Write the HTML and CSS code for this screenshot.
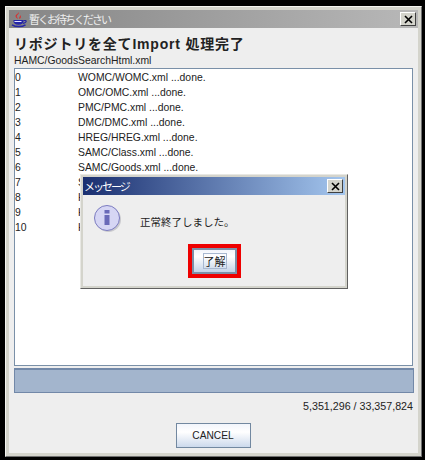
FILE: index.html
```html
<!DOCTYPE html>
<html lang="ja">
<head>
<meta charset="utf-8">
<title>暫くお待ちください</title>
<link rel="stylesheet" href="styles.css">
</head>
<body>
<div class="window">
  <div class="titlebar">
    <svg class="java-icon" width="18" height="18" viewBox="0 0 18 18">
      <path d="M7.500 2c1.500 2-2.500 3-1.500 5 .4.800.8 1.200 1 2C5 8 3.500 6 5.500 4.500 6.500 3.800 7.500 3 7.500 2zM9 5c.5 1.500-1.500 2-.5 4C10 8 10.500 6.500 9 5z" fill="#d83030"/>
      <path d="M2.500 10h10v1.500c0 2-2 3.200-5 3.200s-5-1.200-5-3.200z" fill="#2626a8"/>
      <path d="M12.500 10.500h2c1.200 0 1 2.300-2.500 2.800" fill="none" stroke="#2626a8" stroke-width="1.200"/>
      <path d="M1 14.800c3.500 2.400 10 2.400 13.500 0" fill="none" stroke="#2626a8" stroke-width="1.500"/>
      <path d="M3.500 11.500h7" stroke="#dfe0ff" stroke-width="1"/>
    </svg>
    <span class="title-text">暫くお待ちください</span>
    <span class="close-btn main-close"><svg width="9" height="9" viewBox="0 0 9 9"><path d="M1 1l7 7M8 1l-7 7" stroke="#000" stroke-width="1.600"/></svg></span>
  </div>
  <div class="content">
    <h1 class="heading">リポジトリを全てImport 処理完了</h1>
    <div class="path">HAMC/GoodsSearchHtml.xml</div>
    <div class="list">
      <div class="row"><span class="num">0</span><span>WOMC/WOMC.xml ...done.</span></div>
      <div class="row"><span class="num">1</span><span>OMC/OMC.xml ...done.</span></div>
      <div class="row"><span class="num">2</span><span>PMC/PMC.xml ...done.</span></div>
      <div class="row"><span class="num">3</span><span>DMC/DMC.xml ...done.</span></div>
      <div class="row"><span class="num">4</span><span>HREG/HREG.xml ...done.</span></div>
      <div class="row"><span class="num">5</span><span>SAMC/Class.xml ...done.</span></div>
      <div class="row"><span class="num">6</span><span>SAMC/Goods.xml ...done.</span></div>
      <div class="row"><span class="num">7</span><span>SAMC/Item.xml ...done.</span></div>
      <div class="row"><span class="num">8</span><span>HAMC/Class.xml ...done.</span></div>
      <div class="row"><span class="num">9</span><span>HAMC/Goods.xml ...done.</span></div>
      <div class="row"><span class="num">10</span><span>HAMC/Item.xml ...done.</span></div>
    </div>
    <div class="progress"></div>
    <div class="count">5,351,296 / 33,357,824</div>
    <div class="actions"><button class="cancel" type="button">CANCEL</button></div>
  </div>
</div>

<div class="dialog">
  <div class="dialog-title">
    <span class="dialog-title-text">メッセージ</span>
    <span class="close-btn"><svg width="9" height="9" viewBox="0 0 9 9"><path d="M1 1l7 7M8 1l-7 7" stroke="#000" stroke-width="1.600"/></svg></span>
  </div>
  <div class="dialog-body">
    <div class="message">
      <svg class="info" width="30" height="30" viewBox="0 0 30 30">
        <circle cx="15.500" cy="15.500" r="12.500" fill="#b0b0b8" opacity=".6"/>
        <circle cx="14" cy="14" r="12.500" fill="#d6d6f4" stroke="#7c7cc0" stroke-width="1"/>
        <rect x="11.500" y="6" width="5" height="3.500" fill="#6a6ab8"/>
        <rect x="11.500" y="11" width="5" height="10" fill="#6a6ab8"/>
      </svg>
      <span class="message-text">正常終了しました。</span>
    </div>
    <div class="ok-highlight">
      <button class="ok" type="button"><span class="ok-focus">了解</span></button>
    </div>
  </div>
</div>
</body>
</html>
```
FILE: styles.css
```css
* { box-sizing: border-box; }
html, body { margin: 0; padding: 0; }
body {
  width: 425px;
  height: 460px;
  background: #000;
  font-family: "Liberation Sans", "Noto Sans CJK JP", sans-serif;
  position: relative;
  overflow: hidden;
  padding: 6px 3px 3px 5px;
}
.window {
  width: 417px;
  height: 451px;
  background: #eee;
  border: 1px solid;
  border-color: #f4f4f0 #707070 #707070 #f4f4f0;
  box-shadow: inset 0 0 0 3px #d4d4cc;
  padding: 3px;
  display: flex;
  flex-direction: column;
}
.titlebar {
  height: 18px;
  flex: none;
  display: flex;
  align-items: center;
  background: linear-gradient(90deg, #858585, #b8b8b8);
  padding: 0 2px 0 2px;
}
.java-icon { flex: none; margin-right: 0; }
.title-text {
  color: #eee;
  font-size: 11px;
  letter-spacing: -2px;
  font-family: "Noto Sans CJK JP", sans-serif;
  flex: 1;
}
.close-btn {
  width: 16px;
  height: 14px;
  background: #d4d4cc;
  border: 1px solid;
  border-color: #fff #404040 #404040 #fff;
  display: flex;
  align-items: center;
  justify-content: center;
  flex: none;
}
.content {
  flex: 1;
  display: flex;
  flex-direction: column;
  padding: 0 5px 0 5px;
  min-height: 0;
}
.heading {
  margin: 8px 0 0;
  height: 17px;
  line-height: 17px;
  font-size: 14px;
  font-weight: bold;
  color: #222;
  font-family: "Liberation Sans", "Noto Sans CJK JP", sans-serif;
  letter-spacing: 0.8px;
}
.path {
  margin-top: 1px;
  height: 14px;
  line-height: 14px;
  font-size: 10.4px;
  color: #222;
}
.list {
  margin-top: 0;
  height: 298px;
  background: #fff;
  border: 1px solid #7a90a8;
  padding-top: 1px;
  font-size: 10.4px;
  color: #222;
}
.row {
  display: flex;
  height: 15px;
  line-height: 15px;
}
.num { width: 63px; flex: none; }
.progress {
  margin: 2px -1px 0 0;
  height: 25px;
  background: #a3b5cd;
  border: 1px solid #7288a8;
  border-top-width: 2px;
}
.count {
  margin-top: 6px;
  height: 14px;
  line-height: 14px;
  font-size: 10.7px;
  color: #222;
  text-align: right;
  padding-right: 0;
}
.actions {
  margin-top: 10px;
  display: flex;
  justify-content: center;
  padding-right: 1px;
}
.cancel {
  width: 75px;
  height: 25px;
  padding: 0;
  font-size: 10.2px;
  font-family: inherit;
  color: #222;
  border: 1px solid #7288a0;
  background: linear-gradient(180deg, #f2f5fb 0%, #fff 35%, #ccd9ec 100%);
}
.dialog {
  position: absolute;
  left: 80px;
  top: 174px;
  width: 268px;
  height: 115px;
  background: #eee;
  border: 1px solid;
  border-color: #e8e8e4 #606060 #606060 #e8e8e4;
  box-shadow: inset 0 0 0 2px #d4d4cc;
  padding: 2px;
  display: flex;
  flex-direction: column;
}
.dialog-title {
  height: 18px;
  flex: none;
  display: flex;
  align-items: center;
  justify-content: space-between;
  background: linear-gradient(90deg, #1a2f70, #a4c6ee);
  padding: 0 2px 0 1px;
}
.dialog-title-text {
  color: #fff;
  font-size: 11px;
  letter-spacing: -2px;
  font-family: "Noto Sans CJK JP", sans-serif;
}
.dialog-body {
  flex: 1;
  padding: 9px 0 0 10px;
}
.message {
  display: flex;
  align-items: center;
  height: 30px;
}
.info { flex: none; }
.message-text {
  margin: 5px 0 0 17px;
  font-size: 10.5px;
  color: #222;
  font-family: "Noto Sans CJK JP", sans-serif;
}
.ok-highlight {
  margin: 10px 0 0 95px;
  width: 53px;
  height: 34px;
  border: 4px solid #ee0000;
}
.ok {
  display: flex;
  align-items: center;
  justify-content: center;
  width: 45px;
  height: 26px;
  padding: 0;
  border: 2px solid #7c90a8;
  background: linear-gradient(180deg, #f2f5fb 0%, #fff 30%, #c4d4e8 100%);
}
.ok-focus {
  width: 24px;
  height: 16px;
  line-height: 14px;
  font-size: 11px;
  font-family: "Noto Sans CJK JP", sans-serif;
  color: #222;
  border: 1px solid #a8b8d0;
  text-align: center;
}
```
